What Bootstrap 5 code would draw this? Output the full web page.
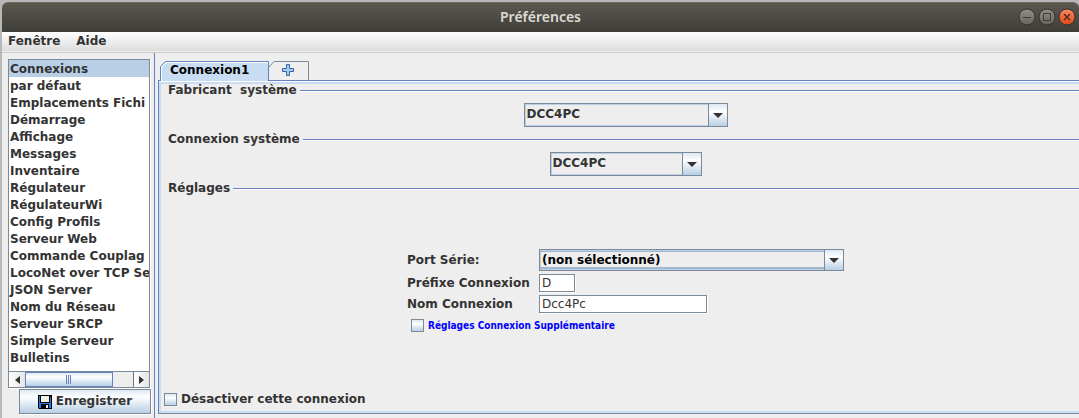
<!DOCTYPE html>
<html lang="fr">
<head>
<meta charset="utf-8">
<meta name="viewport" content="width=device-width, initial-scale=1">
<title>Préférences</title>
<link href="https://cdn.jsdelivr.net/npm/bootstrap@5.3.0/dist/css/bootstrap.min.css" rel="stylesheet">
<style>
:root{--edge:#7a8a99;--blue:#6382bf;--soft:#b8cfe5;--pane:#c8ddf2;--face:#eee;--ink:#333}
body{font-family:"DejaVu Sans",sans-serif;font-size:12px;font-weight:700;line-height:17px;color:var(--ink);background:#b8b8b8}
.app-window{padding:2px 0 0 2px}
.title-bar{height:30px;background:linear-gradient(#5c5850,#3e3d38);border-top:1px solid #6c6a58;border-radius:6px 6px 0 0;color:#dfdbd2;font:600 14px/28px "Noto Sans",sans-serif}
.title-buttons{right:3px;top:5px;gap:2px}
.title-buttons button{width:18px;height:18px;padding:0;border:0;background:none;display:flex}
.menu-strip{height:21px;padding:1px 6px 0;gap:16px;background:linear-gradient(#fff,#dadada);border-bottom:1px solid #ccc;box-shadow:inset 0 -1px #eee}
.menu-strip a{color:var(--ink);text-decoration:none}
.workspace{background:var(--face)}
.side-pane{width:153px;padding:6px 3px 4px 6px;border-right:1px solid var(--blue)}
.side-frame{width:142px;border:1px solid var(--edge);box-shadow:1px 1px #fff;background:#fff}
.section-list a{display:block;height:17px;padding:1px 0 0 1px;color:var(--ink);text-decoration:none;white-space:nowrap}
.section-list a.active{background:var(--soft)}
.scroll-strip{height:16px;border-top:1px solid var(--edge);background:var(--face)}
.scroll-strip button{width:16px;padding:0;border:0;background:linear-gradient(90deg,#fff,#e4e4e4);display:flex;align-items:center;justify-content:center}
.scroll-thumb{width:88px;border:1px solid var(--blue);background:linear-gradient(#dde8f3,#fff 30%,#b8cfe5);display:flex;align-items:center;justify-content:center}
.save-button{width:132px;height:25px;margin:1px 0 0 11px;padding:0;gap:4px;border:1px solid var(--edge);box-shadow:1px 1px #fff;background:linear-gradient(#dde8f3,#fff 30%,#b8cfe5);color:var(--ink);font-weight:700}
.main-pane{padding:8px 0 4px 3px}
.tab-strip{height:19px;padding-left:2px}
.tab-strip button{position:relative;height:18px;padding:0;border:0;background:none;color:#000;font-weight:700;line-height:16px;align-self:flex-end}
.tab-strip svg.outline{position:absolute;left:0;bottom:-1px}
.tab-strip span{position:relative}
.tab-strip .tab-current{width:109px;padding:0 0 2px 10px;text-align:left}
.tab-add{width:40px}
.tab-body{border:1px solid var(--blue);border-right:0;border-bottom-color:var(--edge);box-shadow:inset 0 1px #fff,inset 2px 3px var(--pane),inset 0 -2px var(--pane);padding:1px 0 5px 3px}
.group-title{font-size:12px;line-height:17px;height:17px;margin:0;padding-left:6px;gap:3px;white-space:pre}
.group-title::after{content:"";flex:1;height:2px;margin-top:1px;border-top:1px solid var(--blue);border-bottom:1px solid #fff}
.centered{padding-left:10px}
.combo{position:relative;display:block}
.combo select{display:block;width:100%;height:24px;padding:0 24px 2px 2px;appearance:none;border:1px solid var(--edge);border-radius:0;background:var(--face);box-shadow:inset 0 0 0 1px var(--soft);color:var(--ink);font-weight:700;line-height:20px}
.combo::before{content:"";position:absolute;right:0;top:0;bottom:0;width:20px;border:1px solid var(--edge);background:linear-gradient(#dde8f3,#fff 35%,#b8cfe5);pointer-events:none}
.combo::after{content:"";position:absolute;right:5px;top:50%;border:5px solid transparent;border-top-color:var(--ink);border-bottom:0;margin-top:-2px;pointer-events:none}
.combo.focused select{height:22px;color:#000;box-shadow:inset 0 1px var(--soft),inset 0 -1px var(--soft),inset 0 2px #a3b8cc,inset 0 -3px #a3b8cc,inset 1px 0 var(--soft)}
.combo-maker{width:204px;margin:4px 0}
.combo-system{width:152px;margin:4px 0}
.combo-port{width:305px}
.settings-form{display:grid;grid-template-columns:129px 305px;gap:3px;width:437px;margin-top:52px}
.settings-form label{white-space:nowrap}
.field-box{height:18px;padding:0 2px;border:1px solid var(--edge);border-radius:0;box-shadow:1px 1px #fff;background:#fff;color:var(--ink);font-weight:400;line-height:16px}
.field-short{width:36px}
.field-long{width:168px}
.tick{appearance:none;width:13px;height:13px;margin:0;border:1px solid var(--edge);background:linear-gradient(#dde8f3,#fff 35%,#b8cfe5)}
.extra{grid-column:1/3;gap:4px;padding-left:4px;margin-top:3px;color:#00f}
.extra label{font-family:"DejaVu Sans Condensed","DejaVu Sans",sans-serif;font-size:10px;line-height:13px}
.disable-row{gap:4px;padding-left:2px}
</style>
</head>
<body>
<div class="app-window d-flex flex-column min-vh-100">
<header class="title-bar position-relative text-center">Préférences
<div class="title-buttons position-absolute d-flex">
<button aria-label="Réduire"><svg width="18" height="18"><defs><linearGradient id="g" x2="0" y2="1"><stop stop-color="#918f87"/><stop offset="1" stop-color="#64635d"/></linearGradient><linearGradient id="o" x2="0" y2="1"><stop stop-color="#f98a63"/><stop offset="1" stop-color="#dd4814"/></linearGradient></defs><circle cx="9" cy="9" r="8" fill="url(#g)" stroke="#33322e"/><path d="M5 9.5h8" stroke="#3c3b37"/></svg></button>
<button aria-label="Agrandir"><svg width="18" height="18"><circle cx="9" cy="9" r="8" fill="url(#g)" stroke="#33322e"/><path d="M5.500 5.500h7v7h-7z" fill="none" stroke="#3c3b37"/></svg></button>
<button aria-label="Fermer"><svg width="18" height="18"><circle cx="9" cy="9" r="8" fill="url(#o)" stroke="#33322e"/><path d="M6 6l6 6M12 6l-6 6" stroke="#4b2a1c" stroke-width="1.400"/></svg></button>
</div>
</header>
<nav class="menu-strip d-flex"><a href="#">Fenêtre</a><a href="#">Aide</a></nav>
<div class="workspace d-flex flex-grow-1">
<aside class="side-pane d-flex flex-column flex-shrink-0">
<div class="side-frame d-flex flex-column flex-grow-1">
<nav class="section-list flex-grow-1 overflow-hidden">
<a class="active" href="#">Connexions</a><a href="#">par défaut</a><a href="#">Emplacements Fichi</a><a href="#">Démarrage</a><a href="#">Affichage</a><a href="#">Messages</a><a href="#">Inventaire</a><a href="#">Régulateur</a><a href="#">RégulateurWi</a><a href="#">Config Profils</a><a href="#">Serveur Web</a><a href="#">Commande Couplag</a><a href="#">LocoNet over TCP Se</a><a href="#">JSON Server</a><a href="#">Nom du Réseau</a><a href="#">Serveur SRCP</a><a href="#">Simple Serveur</a><a href="#">Bulletins</a>
</nav>
<div class="scroll-strip d-flex">
<button aria-label="Défiler à gauche"><svg width="5" height="8"><path d="M5 0v8L0 4z" fill="#333"/></svg></button>
<div class="scroll-thumb"><svg width="6" height="9"><path d="M.5 0v9M2.500 0v9M4.500 0v9" stroke="#6382bf"/></svg></div>
<button class="ms-auto border-start border-secondary" aria-label="Défiler à droite"><svg width="5" height="8"><path d="M0 0v8l5-4z" fill="#333"/></svg></button>
</div>
</div>
<button class="save-button d-flex align-items-center justify-content-center"><svg width="14" height="14"><path d="M0 0h14v14H1l-1-1z" fill="#000"/><path d="M1 1h1v7h10V2h1v11H1z" fill="#1a80f0"/><path d="M3 1h8v6H3z" fill="#f0f0e4"/><path d="M3 9h8v5H3z" fill="#000"/><path d="M8 10h2v3H8z" fill="#f0f0e4"/></svg>Enregistrer</button>
</aside>
<main class="main-pane d-flex flex-column flex-grow-1">
<div class="tab-strip d-flex">
<button class="tab-current"><svg class="outline" width="109" height="21"><path d="M.5 21V6.500l5-5h103V21" fill="#c8ddf2" stroke="#6382bf"/><path d="M1.500 21V7l5-4.500h101" fill="none" stroke="#fff"/></svg><span>Connexion1</span></button>
<button class="tab-add" aria-label="Ajouter une connexion"><svg class="outline" width="40" height="20"><path d="M0 6l5-5.500h34.500V20" fill="none" stroke="#7a8a99"/><path d="M17.500 3.500h3v4h4v3h-4v4h-3v-4h-4v-3h4z" fill="#a4ccea" stroke="#3465a4"/></svg></button>
</div>
<div class="tab-body d-flex flex-column flex-grow-1">
<fieldset><legend class="group-title d-flex align-items-center float-none">Fabricant  système</legend>
<div class="centered d-flex justify-content-center"><div class="combo combo-maker"><select aria-label="Fabricant système"><option>DCC4PC</option></select></div></div></fieldset>
<fieldset><legend class="group-title d-flex align-items-center float-none">Connexion système</legend>
<div class="centered d-flex justify-content-center"><div class="combo combo-system"><select aria-label="Connexion système"><option>DCC4PC</option></select></div></div></fieldset>
<fieldset><legend class="group-title d-flex align-items-center float-none">Réglages</legend>
<div class="centered d-flex justify-content-center"><div class="settings-form align-items-center">
<label for="port">Port Série:</label><div class="combo combo-port focused"><select id="port"><option>(non sélectionné)</option></select></div>
<label for="prefix">Préfixe Connexion</label><input class="field-box field-short" id="prefix" value="D">
<label for="cname">Nom Connexion</label><input class="field-box field-long" id="cname" value="Dcc4Pc">
<div class="extra d-flex align-items-center"><input class="tick" type="checkbox" id="extra"><label for="extra">Réglages Connexion Supplémentaire</label></div>
</div></div></fieldset>
<div class="disable-row mt-auto d-flex align-items-center"><input class="tick" type="checkbox" id="off"><label for="off">Désactiver cette connexion</label></div>
</div>
</main>
</div>
</div>
<script src="https://cdn.jsdelivr.net/npm/bootstrap@5.3.0/dist/js/bootstrap.bundle.min.js"></script>
</body>
</html>
